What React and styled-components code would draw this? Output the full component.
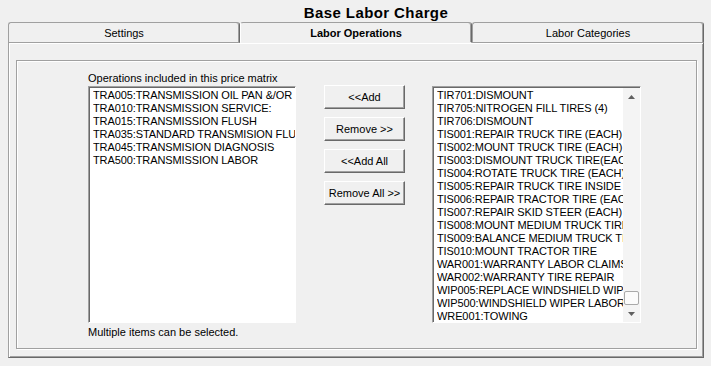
import React from "react";
import styled, { createGlobalStyle } from "styled-components";

/* ---------------- DATA ---------------- */

const tabs = [
  { label: "Settings" },
  { label: "Labor Operations", active: true },
  { label: "Labor Categories" },
];

const included = [
  "TRA005:TRANSMISSION OIL PAN &/OR",
  "TRA010:TRANSMISSION SERVICE:",
  "TRA015:TRANSMISSION FLUSH",
  "TRA035:STANDARD TRANSMISION FLUSH",
  "TRA045:TRANSMISION DIAGNOSIS",
  "TRA500:TRANSMISSION LABOR",
];

const available = [
  "TIR701:DISMOUNT",
  "TIR705:NITROGEN FILL TIRES (4)",
  "TIR706:DISMOUNT",
  "TIS001:REPAIR TRUCK TIRE (EACH)",
  "TIS002:MOUNT TRUCK TIRE (EACH)",
  "TIS003:DISMOUNT TRUCK TIRE(EACH)",
  "TIS004:ROTATE TRUCK TIRE (EACH)",
  "TIS005:REPAIR TRUCK TIRE INSIDE",
  "TIS006:REPAIR TRACTOR TIRE (EACH)",
  "TIS007:REPAIR SKID STEER (EACH)",
  "TIS008:MOUNT MEDIUM TRUCK TIRE",
  "TIS009:BALANCE MEDIUM TRUCK TIRE",
  "TIS010:MOUNT TRACTOR TIRE",
  "WAR001:WARRANTY LABOR CLAIMS",
  "WAR002:WARRANTY TIRE REPAIR",
  "WIP005:REPLACE WINDSHIELD WIPER",
  "WIP500:WINDSHIELD WIPER LABOR",
  "WRE001:TOWING",
];

const actions = ["<<Add", "Remove >>", "<<Add All", "Remove All >>"];

/* ---------------- COMPONENT ---------------- */

const Arrow = ({ down }) => (
  <svg width="7" height="4" viewBox="0 0 7 4">
    <polygon
      points={down ? "0,0 7,0 3.5,4" : "0,4 7,4 3.5,0"}
      fill="#606060"
    />
  </svg>
);

const App = () => (
  <>
    <GlobalStyle />
    <Window>
      <Title>Base Labor Charge</Title>

      <TabStrip>
        {tabs.map((t) => (
          <Tab key={t.label} $active={t.active}>
            {t.label}
          </Tab>
        ))}
      </TabStrip>

      <Panel>
        <GroupBox>
          <Column>
            <Caption>Operations included in this price matrix</Caption>
            <ListBox $width={208}>
              <Items>
                {included.map((i) => (
                  <Item key={i}>{i}</Item>
                ))}
              </Items>
            </ListBox>
            <Hint>Multiple items can be selected.</Hint>
          </Column>

          <Buttons>
            {actions.map((a) => (
              <Button key={a}>{a}</Button>
            ))}
          </Buttons>

          <ListBox $width={209} $offset={14} $gap={27}>
            <Items>
              {available.map((i) => (
                <Item key={i}>{i}</Item>
              ))}
            </Items>
            <ScrollBar>
              <ScrollButton>
                <Arrow />
              </ScrollButton>
              <Track>
                <Thumb />
              </Track>
              <ScrollButton>
                <Arrow down />
              </ScrollButton>
            </ScrollBar>
          </ListBox>
        </GroupBox>
      </Panel>
    </Window>
  </>
);

export default App;

/* ---------------- STYLES ---------------- */

const GlobalStyle = createGlobalStyle`
  html, body {
    margin: 0;
    padding: 0;
    background: #f0f0f0;
  }
  body {
    font-family: "Liberation Sans", Arial, sans-serif;
    font-size: 11px;
    color: #000;
  }
  * {
    box-sizing: border-box;
  }
`;

const Window = styled.div`
  width: 711px;
  height: 366px;
  background: #f0f0f0;
  overflow: hidden;
`;

const Title = styled.div`
  height: 22px;
  padding: 3px 0 0 41px;
  text-align: center;
  font-size: 15px;
  font-weight: 700;
  line-height: 19px;
  letter-spacing: 0.4px;
`;

const TabStrip = styled.div`
  display: flex;
  width: 696px;
  height: 21px;
  margin-left: 8px;
`;

const Tab = styled.div`
  flex: 1;
  height: 21px;
  padding-top: 1px;
  border-top: 1px solid #a0a0a0;
  border-left: 1px solid ${(p) => (p.$active ? "#ffffff" : "#a0a0a0")};
  border-right: 1px solid #696969;
  border-bottom: 1px solid ${(p) => (p.$active ? "#f0f0f0" : "#a0a0a0")};
  border-radius: 3px 3px 0 0;
  box-shadow: inset -1px 0 0 #a0a0a0;
  text-align: center;
  line-height: 18px;
  font-weight: ${(p) => (p.$active ? 700 : 400)};
  white-space: nowrap;
`;

const Panel = styled.div`
  display: flex;
  width: 696px;
  height: 315px;
  margin-left: 8px;
  padding: 17px 6px 8px 7px;
  border-left: 1px solid #a0a0a0;
  border-right: 1px solid #696969;
  border-bottom: 1px solid #696969;
  box-shadow: inset 1px 1px 0 #ffffff, inset -1px -1px 0 #a0a0a0;
`;

const GroupBox = styled.div`
  flex: 1;
  display: flex;
  align-items: flex-start;
  padding: 11px 0 0 71px;
  border: 1px solid #a0a0a0;
  box-shadow: inset 1px 1px 0 #ffffff, 1px 1px 0 #ffffff;
`;

const Column = styled.div`
  display: flex;
  flex-direction: column;
  width: 208px;
`;

const Caption = styled.div`
  line-height: 13px;
  margin-bottom: 1px;
  white-space: nowrap;
`;

const Hint = styled.div`
  line-height: 13px;
  margin-top: 3px;
  white-space: nowrap;
`;

const ListBox = styled.div`
  display: flex;
  width: ${(p) => p.$width}px;
  height: 237px;
  margin-top: ${(p) => p.$offset || 0}px;
  margin-left: ${(p) => p.$gap || 0}px;
  padding: 1px 0 0 1px;
  background: #ffffff;
  border: 1px solid;
  border-color: #a0a0a0 #ffffff #ffffff #a0a0a0;
  box-shadow: inset 1px 1px 0 #696969;
  overflow: hidden;
`;

const Items = styled.div`
  flex: 1;
  min-width: 0;
  padding: 1px 0 0 3px;
  overflow: hidden;
`;

const Item = styled.div`
  height: 13px;
  line-height: 13px;
  letter-spacing: -0.1px;
  white-space: nowrap;
  overflow: hidden;
`;

const ScrollBar = styled.div`
  display: flex;
  flex-direction: column;
  width: 17px;
  background: #f4f4f4;
`;

const ScrollButton = styled.div`
  display: flex;
  align-items: center;
  justify-content: center;
  height: 17px;
`;

const Track = styled.div`
  flex: 1;
  display: flex;
  flex-direction: column;
  justify-content: flex-end;
  padding: 0 1px;
`;

const Thumb = styled.div`
  height: 14px;
  background: #fbfbfb;
  border: 1px solid #a9a9a9;
  border-radius: 2px;
`;

const Buttons = styled.div`
  display: flex;
  flex-direction: column;
  gap: 8px;
  margin: 13px 0 0 28px;
`;

const Button = styled.div`
  width: 81px;
  height: 24px;
  display: flex;
  align-items: center;
  justify-content: center;
  background: #f0f0f0;
  border: 1px solid;
  border-color: #ffffff #696969 #696969 #ffffff;
  box-shadow: inset -1px -1px 0 #a0a0a0;
  white-space: nowrap;
`;
